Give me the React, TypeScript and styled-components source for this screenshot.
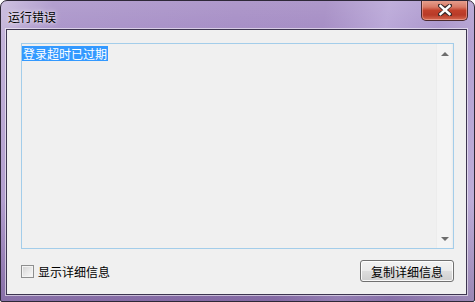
import React from "react";
import styled, { createGlobalStyle } from "styled-components";

const Global = createGlobalStyle`
  html, body { margin: 0; padding: 0; background: #ffffff; }
  body { font-family: "Noto Sans CJK SC", "Noto Sans", sans-serif; }
  * { box-sizing: border-box; }
`;

const Window = styled.div`
  position: relative;
  width: 475px;
  height: 302px;
  border: 1px solid #2e2838;
  border-radius: 7px 7px 2px 2px;
  display: flex;
  flex-direction: column;
  padding: 0 7px 6px 5px;
  background:
    linear-gradient(180deg, rgba(255,255,255,0.12) 0px, rgba(255,255,255,0) 40px, rgba(50,20,80,0) 200px, rgba(50,20,80,0.28) 100%),
    linear-gradient(100deg, #c7b9dc 0%, #a993c9 10%, #a48bc4 45%, #a38ac3 62%, #b8a5d7 74%, #a994cb 84%, #c3b4dc 100%);
  overflow: hidden;
`;

const TitleBar = styled.div`
  height: 28px;
  flex: 0 0 28px;
  display: flex;
  align-items: flex-start;
  justify-content: space-between;
  padding-left: 2px;
`;

const Title = styled.div`
  margin-top: 8px;
  font-size: 12px;
  line-height: 16px;
  color: #000;
  text-shadow: 0 0 6px rgba(255,255,255,0.9), 0 0 3px rgba(255,255,255,0.7);
`;

const CloseButton = styled.div`
  width: 47px;
  height: 21px;
  margin-top: -1px;
  margin-right: -1px;
  border: 1px solid #4a2a2e;
  border-top: none;
  border-radius: 0 0 5px 5px;
  display: flex;
  align-items: center;
  justify-content: center;
  background: linear-gradient(180deg, #e7a493 0%, #d87a66 35%, #c2412c 52%, #b83a28 75%, #d66a52 100%);
  box-shadow: inset 0 0 0 1px rgba(255, 200, 190, 0.45);
`;

const Client = styled.div`
  flex: 1;
  border: 1px solid #3d3550;
  box-shadow: 0 0 0 1px rgba(255,255,255,0.55);
  background: #f0f0f0;
  display: flex;
  flex-direction: column;
  padding: 13px 12px 12px 14px;
  gap: 11px;
`;

const TextBox = styled.div`
  height: 206px;
  border: 1px solid #a3cdea;
  background: #f0f0f0;
  display: flex;
`;

const TextArea = styled.div`
  flex: 1;
  padding: 2px 0 0 0;
  font-size: 12px;
  line-height: 15px;
  color: #000;
`;

const Selected = styled.span`
  background: #3399ff;
  color: #fff;
  padding: 0 1px;
  display: inline-block;
`;

const ScrollBar = styled.div`
  width: 17px;
  display: flex;
  flex-direction: column;
  justify-content: space-between;
  align-items: center;
  padding: 8px 0 7px;
  background: linear-gradient(90deg, #e4e4e4 0px, #f4f4f4 1px, #f4f4f4 15px, #ebebeb 17px);
`;

const Arrow = styled.div<{ $down?: boolean }>`
  width: 0;
  height: 0;
  border-left: 4px solid transparent;
  border-right: 4px solid transparent;
  ${(p) => (p.$down ? "border-top: 4px solid #6d6d6d;" : "border-bottom: 4px solid #6d6d6d;")}
`;

const Footer = styled.div`
  height: 22px;
  display: flex;
  align-items: center;
  justify-content: space-between;
`;

const CheckLabel = styled.label`
  display: flex;
  align-items: center;
  gap: 4px;
  font-size: 12px;
  line-height: 15px;
  color: #000;
  margin-left: 0;
`;

const CheckBox = styled.span`
  width: 13px;
  height: 13px;
  border: 1px solid #8e8f8f;
  background: linear-gradient(135deg, #d2d2d2 0%, #e8e8e8 50%, #fafafa 100%);
  box-shadow: inset 0 0 0 1px #f4f4f4;
`;

const Button = styled.div`
  width: 94px;
  height: 22px;
  border: 1px solid #707070;
  border-radius: 3px;
  display: flex;
  align-items: center;
  justify-content: center;
  font-size: 12px;
  color: #000;
  background: linear-gradient(180deg, #f2f2f2 0%, #ebebeb 48%, #dddddd 52%, #cfcfcf 100%);
  box-shadow: inset 0 0 0 1px rgba(255,255,255,0.85);
`;

export default function App() {
  return (
    <>
      <Global />
      <Window>
        <TitleBar>
          <Title>运行错误</Title>
          <CloseButton>
            <svg width="14" height="12" viewBox="0 0 14 12">
              <path
                d="M2 1.5 L7 5 L12 1.5 M2 10.5 L7 7 L12 10.5 M2 1.5 L12 10.5 M12 1.5 L2 10.5"
                stroke="#3a2a2a"
                strokeWidth="4"
                strokeLinecap="square"
                fill="none"
              />
              <path
                d="M2.5 2 L11.5 10 M11.5 2 L2.5 10"
                stroke="#ffffff"
                strokeWidth="2.4"
                strokeLinecap="square"
                fill="none"
              />
            </svg>
          </CloseButton>
        </TitleBar>
        <Client>
          <TextBox>
            <TextArea>
              <Selected>登录超时已过期</Selected>
            </TextArea>
            <ScrollBar>
              <Arrow />
              <Arrow $down />
            </ScrollBar>
          </TextBox>
          <Footer>
            <CheckLabel>
              <CheckBox />
              显示详细信息
            </CheckLabel>
            <Button>复制详细信息</Button>
          </Footer>
        </Client>
      </Window>
    </>
  );
}
